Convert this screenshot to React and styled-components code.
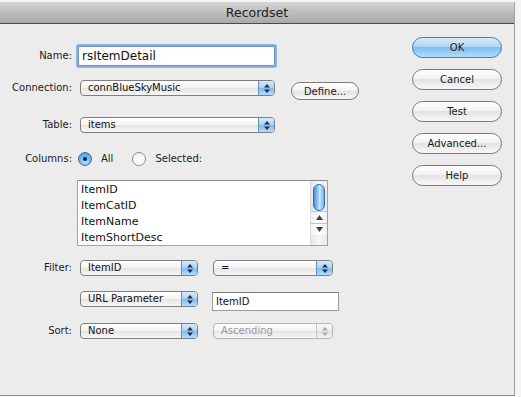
import React from 'react'
import styled, { createGlobalStyle, css } from 'styled-components'

const GlobalStyle = createGlobalStyle`
  html, body { margin: 0; padding: 0; background: #f3f3f3; }
  body { font-family: "DejaVu Sans", "Lucida Grande", sans-serif; color: #1a1a1a; }
`

const Arrows = ({ disabled }) => (
  <svg width="8" height="11" viewBox="0 0 8 11">
    <polygon points="1,4.5 4,1 7,4.5" fill={disabled ? '#aaa' : '#1d2d4c'} />
    <polygon points="1,6.5 4,10 7,6.5" fill={disabled ? '#aaa' : '#1d2d4c'} />
  </svg>
)

const Select = ({ value, width, disabled }) => (
  <SelectBox $w={width} $disabled={disabled}>
    <SelectText $disabled={disabled}>{value}</SelectText>
    <SelectKnob $disabled={disabled}><Arrows disabled={disabled} /></SelectKnob>
  </SelectBox>
)

const Radio = ({ checked, label }) => (
  <RadioItem>
    <RadioDot $checked={checked} />
    <span>{label}</span>
  </RadioItem>
)

const columns = ['ItemID', 'ItemCatID', 'ItemName', 'ItemShortDesc']

const App = () => {
  return (
    <>
      <GlobalStyle />
      <Page>
        <Window>
          <TitleBar>Recordset</TitleBar>
          <Body>
            <Form>
              <Row $mt={22}>
                <Label $h={20}>Name:</Label>
                <NameInput value="rsItemDetail" readOnly />
              </Row>
              <Row $mt={14}>
                <Label $h={16}>Connection:</Label>
                <Controls>
                  <Select value="connBlueSkyMusic" width={195} />
                  <PillButton $small>Define...</PillButton>
                </Controls>
              </Row>
              <Row $mt={17}>
                <Label $h={16}>Table:</Label>
                <Select value="items" width={195} />
              </Row>
              <Row $mt={19}>
                <Label $h={14}>Columns:</Label>
                <Controls $gap={19}>
                  <Radio checked label="All" />
                  <Radio label="Selected:" />
                </Controls>
              </Row>
              <Row $mt={14}>
                <span />
                <ListBox>
                  <ListItems>
                    {columns.map((c) => <ListItem key={c}>{c}</ListItem>)}
                  </ListItems>
                  <ScrollBar>
                    <Thumb />
                    <ScrollArrow>
                      <svg width="7" height="5" viewBox="0 0 7 5"><polygon points="0,5 3.5,0 7,5" fill="#444" /></svg>
                    </ScrollArrow>
                    <ScrollArrow>
                      <svg width="7" height="5" viewBox="0 0 7 5"><polygon points="0,0 3.5,5 7,0" fill="#444" /></svg>
                    </ScrollArrow>
                  </ScrollBar>
                </ListBox>
              </Row>
              <Row $mt={14}>
                <Label $h={16}>Filter:</Label>
                <Controls $gap={13}>
                  <Select value="ItemID" width={118} />
                  <Select value="=" width={120} />
                </Controls>
              </Row>
              <Row $mt={15}>
                <span />
                <Controls $gap={14}>
                  <Select value="URL Parameter" width={118} />
                  <TextInput value="ItemID" readOnly />
                </Controls>
              </Row>
              <Row $mt={12}>
                <Label $h={16}>Sort:</Label>
                <Controls $gap={13}>
                  <Select value="None" width={118} />
                  <Select value="Ascending" width={120} disabled />
                </Controls>
              </Row>
            </Form>
            <ButtonColumn>
              <PillButton $primary>OK</PillButton>
              <PillButton>Cancel</PillButton>
              <PillButton>Test</PillButton>
              <PillButton>Advanced...</PillButton>
              <PillButton>Help</PillButton>
            </ButtonColumn>
          </Body>
        </Window>
      </Page>
    </>
  )
}

const Page = styled.div`
  width: 521px;
  height: 397px;
  padding-top: 2px;
  box-sizing: border-box;
  background: #f4f4f4;
  overflow: hidden;
`

const Window = styled.div`
  width: 515px;
  height: 394px;
  box-sizing: border-box;
  border-right: 1px solid #a0a0a0;
  border-bottom: 1px solid #8c8c8c;
  background: #ececec;
  display: flex;
  flex-direction: column;
`

const TitleBar = styled.div`
  height: 21px;
  border-bottom: 1px solid #4b4b4b;
  background: linear-gradient(#d6d6d6, #bdbdbd 50%, #a9a9a9);
  text-align: center;
  font-size: 12.5px;
  line-height: 22px;
  color: #222;
`

const Body = styled.div`
  flex: 1;
  display: flex;
  justify-content: space-between;
`

const Form = styled.div`
  display: flex;
  flex-direction: column;
`

const Row = styled.div`
  display: grid;
  grid-template-columns: 72px auto;
  column-gap: 6px;
  align-items: start;
  margin-top: ${(p) => p.$mt}px;
`

const Label = styled.div`
  text-align: right;
  font-size: 10px;
  line-height: ${(p) => p.$h}px;
  color: #1a1a1a;
`

const Controls = styled.div`
  display: flex;
  align-items: flex-start;
  gap: ${(p) => p.$gap ?? 16}px;
`

const NameInput = styled.input`
  width: 197px;
  height: 20px;
  box-sizing: border-box;
  margin: 0;
  padding: 0 3px;
  border: 1px solid #6f8fb8;
  box-shadow: 0 0 0 2px #8cb2e0;
  border-radius: 1px;
  font-family: "DejaVu Sans", sans-serif;
  font-size: 12px;
  color: #111;
  outline: none;
  background: #fff;
`

const TextInput = styled.input`
  width: 127px;
  height: 19px;
  margin: 1px 0 0;
  box-sizing: border-box;
  padding: 0 3px;
  border: 1px solid #9a9a9a;
  border-top-color: #7d7d7d;
  font-family: "DejaVu Sans", sans-serif;
  font-size: 10px;
  color: #111;
  background: #fff;
  outline: none;
`

const SelectBox = styled.div`
  width: ${(p) => p.$w}px;
  height: 16px;
  margin-left: 2px;
  box-sizing: border-box;
  display: flex;
  border: 1px solid ${(p) => (p.$disabled ? '#b4b4b4' : '#7e7e7e')};
  border-radius: 4px;
  background: linear-gradient(#ffffff, #f2f2f2 50%, #e4e4e4 51%, #f7f7f7);
  overflow: hidden;
`

const SelectText = styled.div`
  flex: 1;
  padding-left: 7px;
  font-size: 10px;
  line-height: 14px;
  color: ${(p) => (p.$disabled ? '#9a9a9a' : '#111')};
  white-space: nowrap;
`

const SelectKnob = styled.div`
  width: 15px;
  display: flex;
  align-items: center;
  justify-content: center;
  border-left: 1px solid ${(p) => (p.$disabled ? '#c8c8c8' : '#6d8db5')};
  background: ${(p) =>
    p.$disabled
      ? 'linear-gradient(#fafafa, #ececec 50%, #e2e2e2 51%, #f4f4f4)'
      : 'linear-gradient(#d5e9fb, #a9d1f4 50%, #7fbaf0 51%, #b5dcfb)'};
`

const RadioItem = styled.div`
  display: flex;
  align-items: center;
  gap: 9px;
  font-size: 10px;
  line-height: 14px;
`

const RadioDot = styled.div`
  width: 14px;
  height: 14px;
  box-sizing: border-box;
  border-radius: 50%;
  position: relative;
  ${(p) =>
    p.$checked
      ? css`
          border: 1px solid #3f6da3;
          background: radial-gradient(circle at 50% 75%, #b4dcfb 0%, #6fb3ee 55%, #4d8fd2 100%);
          &::after {
            content: '';
            position: absolute;
            left: 4px;
            top: 4px;
            width: 4px;
            height: 4px;
            border-radius: 50%;
            background: #10213d;
          }
        `
      : css`
          border: 1px solid #8c8c8c;
          background: linear-gradient(#f0f0f0, #ffffff);
        `}
`

const ListBox = styled.div`
  width: 251px;
  height: 66px;
  margin-left: -1px;
  box-sizing: border-box;
  display: flex;
  border: 1px solid #a3a3a3;
  border-top-color: #8a8a8a;
  background: #fff;
`

const ListItems = styled.div`
  flex: 1;
  padding: 1px 0 0 3px;
`

const ListItem = styled.div`
  font-size: 11px;
  line-height: 16px;
  color: #111;
`

const ScrollBar = styled.div`
  width: 16px;
  display: flex;
  flex-direction: column;
  border-left: 1px solid #dcdcdc;
  background: linear-gradient(90deg, #e6e6e6, #f6f6f6 50%, #e9e9e9);
`

const Thumb = styled.div`
  height: 27px;
  margin: 3px 2px 0;
  border-radius: 7px;
  border: 1px solid #3c6fa8;
  background: linear-gradient(90deg, #4e90d8, #a3d1f7 45%, #cfe8fc 55%, #6fb0ec);
  box-sizing: border-box;
`

const ScrollArrow = styled.div`
  height: 11px;
  display: flex;
  align-items: center;
  justify-content: center;
  border-top: 1px solid #c4c4c4;
  background: linear-gradient(90deg, #f2f2f2, #ffffff 50%, #f0f0f0);
  &:first-of-type { margin-top: auto; }
`

const ButtonColumn = styled.div`
  width: 90px;
  margin-right: 12px;
  padding-top: 13px;
  display: flex;
  flex-direction: column;
  gap: 11px;
`

const PillButton = styled.div`
  height: 21px;
  box-sizing: border-box;
  display: flex;
  align-items: center;
  justify-content: center;
  font-size: 10px;
  color: #1a1a1a;
  border: 1px solid ${(p) => (p.$primary ? '#4d78aa' : '#7b7b7b')};
  border-radius: 11px;
  background: ${(p) =>
    p.$primary
      ? 'linear-gradient(#d8ecfc, #aed6f7 45%, #7fbdf1 50%, #b2dcfb)'
      : 'linear-gradient(#ffffff, #f4f4f4 45%, #e3e3e3 50%, #f7f7f7)'};
  ${(p) =>
    p.$small &&
    css`
      width: 68px;
      height: 18px;
      margin-top: 2px;
    `}
`

export default App
